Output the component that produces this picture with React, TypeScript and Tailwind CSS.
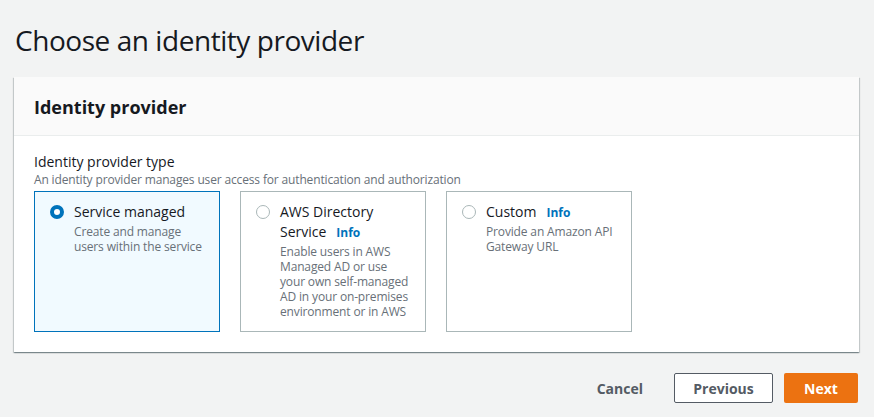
import React, { useState } from "react";

const options = [
  {
    id: "service",
    title: "Service managed",
    info: false,
    desc: "Create and manage users within the service",
  },
  {
    id: "directory",
    title: "AWS Directory Service",
    info: true,
    desc: "Enable users in AWS Managed AD or use your own self-managed AD in your on-premises environment or in AWS",
  },
  {
    id: "custom",
    title: "Custom",
    info: true,
    desc: "Provide an Amazon API Gateway URL",
  },
];

export default function App() {
  const [selected, setSelected] = useState("service");

  return (
    <div
      className="min-h-[417px] bg-[#f2f3f3] px-[15px] pt-[22px] text-[#16191f]"
      style={{ fontFamily: '"Open Sans", "Noto Sans", Arial, sans-serif' }}
    >
      <h1 className="text-[28px] leading-[36px] font-normal tracking-[-0.45px]">
        Choose an identity provider
      </h1>

      <div className="mt-[19px] -ml-px bg-white shadow-[0_1px_1px_0_rgba(0,28,36,0.3),1px_1px_1px_0_rgba(0,28,36,0.15),-1px_1px_1px_0_rgba(0,28,36,0.15)]">
        <div className="h-[59px] flex items-center px-5 pt-[3px] bg-[#fafafa] border-b border-[#eaeded]">
          <h2 className="text-[18px] font-bold">Identity provider</h2>
        </div>

        <div className="px-5 pt-[16px] pb-5">
          <div className="text-[14px] leading-[20px]">Identity provider type</div>
          <div className="text-[12px] leading-[16px] text-[#687078] tracking-[-0.15px]">
            An identity provider manages user access for authentication and authorization
          </div>

          <div className="mt-[3px] flex gap-5">
            {options.map((o) => {
              const active = selected === o.id;
              return (
                <div
                  key={o.id}
                  onClick={() => setSelected(o.id)}
                  className={`w-[186px] h-[141px] border pl-[15px] pr-[12px] pt-[10px] cursor-pointer flex gap-[10px] ${
                    active ? "border-[#0073bb] bg-[#f1faff]" : "border-[#aab7b8] bg-white"
                  }`}
                >
                  <div className="pt-[3px]">
                    <span
                      className={`block w-[14px] h-[14px] rounded-full ${
                        active ? "border-[4px] border-[#0073bb] bg-white" : "border border-[#aab7b8] bg-white"
                      }`}
                    />
                  </div>
                  <div className="flex-1">
                    <div className="text-[14px] leading-[20px]">
                      {o.title}
                      {o.info && (
                        <span className="inline-block ml-[10px] text-[12px] leading-[16px] font-bold text-[#0073bb]">
                          Info
                        </span>
                      )}
                    </div>
                    <div className="mt-[2px] text-[12px] leading-[15px] text-[#687078] tracking-[-0.15px]">
                      {o.desc}
                    </div>
                  </div>
                </div>
              );
            })}
          </div>
        </div>
      </div>

      <div className="mt-[21px] flex justify-end items-center gap-2 pr-px">
        <button className="px-5 h-[30px] text-[14px] font-bold text-[#545b64]">Cancel</button>
        <button className="w-[99px] h-[30px] ml-[3px] border border-[#545b64] bg-white text-[14px] font-bold text-[#545b64] rounded-[2px]">
          Previous
        </button>
        <button className="w-[74px] h-[30px] ml-[3px] bg-[#ec7211] text-white text-[14px] font-bold rounded-[2px]">
          Next
        </button>
      </div>
    </div>
  );
}
